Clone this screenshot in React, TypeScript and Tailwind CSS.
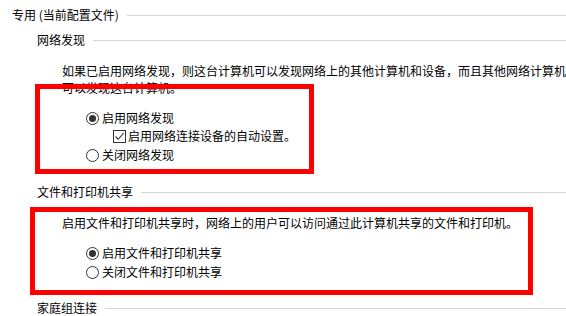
import React from "react";

function Radio({ checked }: { checked?: boolean }) {
  return (
    <span className="flex h-[13px] w-[13px] shrink-0 items-center justify-center rounded-full border border-[#333333] bg-white">
      {checked && <span className="h-[7px] w-[7px] rounded-full bg-[#333333]" />}
    </span>
  );
}

function Check() {
  return (
    <span className="flex h-[13px] w-[13px] shrink-0 items-center justify-center border border-[#333333] bg-white">
      <svg width="11" height="11" viewBox="0 0 11 11" fill="none">
        <path d="M1.5 5.5 L4.2 8.3 L9.6 2.2" stroke="#333333" strokeWidth="1.1" />
      </svg>
    </span>
  );
}

function Header({ text, pl, mt }: { text: string; pl: string; mt: string }) {
  return (
    <div className={`flex h-[16px] items-center ${pl} ${mt}`}>
      <span className="whitespace-nowrap">{text}</span>
      <span className="ml-[8px] h-px flex-1 bg-[#d4d4d4]" />
    </div>
  );
}

export default function App() {
  return (
    <div
      className="relative h-[316px] w-[566px] overflow-hidden bg-white text-[12px] leading-[16px] text-black"
      style={{ fontFamily: '"Microsoft YaHei", "Noto Sans CJK SC", sans-serif' }}
    >
      <Header text="专用 (当前配置文件)" pl="pl-[12px]" mt="mt-[7px]" />
      <Header text="网络发现" pl="pl-[37px]" mt="mt-[9px]" />
      <div className="mt-[15px] h-[16px] whitespace-nowrap pl-[62px]">
        如果已启用网络发现，则这台计算机可以发现网络上的其他计算机和设备，而且其他网络计算机
      </div>
      <div className="mt-[1px] h-[16px] whitespace-nowrap pl-[62px]">可以发现这台计算机。</div>
      <div className="mt-[14px] flex h-[16px] items-center gap-[3px] pl-[86px]">
        <Radio checked />
        <span>启用网络发现</span>
      </div>
      <div className="mt-[2px] flex h-[16px] items-center gap-[2px] pl-[113px]">
        <Check />
        <span>启用网络连接设备的自动设置。</span>
      </div>
      <div className="mt-[3px] flex h-[16px] items-center gap-[3px] pl-[86px]">
        <Radio />
        <span>关闭网络发现</span>
      </div>
      <Header text="文件和打印机共享" pl="pl-[37px]" mt="mt-[21px]" />
      <div className="mt-[15px] h-[16px] whitespace-nowrap pl-[62px]">
        启用文件和打印机共享时，网络上的用户可以访问通过此计算机共享的文件和打印机。
      </div>
      <div className="mt-[14px] flex h-[16px] items-center gap-[3px] pl-[86px]">
        <Radio checked />
        <span>启用文件和打印机共享</span>
      </div>
      <div className="mt-[3px] flex h-[16px] items-center gap-[3px] pl-[86px]">
        <Radio />
        <span>关闭文件和打印机共享</span>
      </div>
      <Header text="家庭组连接" pl="pl-[37px]" mt="mt-[20px]" />

      <div className="pointer-events-none absolute left-[35px] top-[84px] h-[90px] w-[279px] border-[5px] border-[#ff0000]" />
      <div className="pointer-events-none absolute left-[30px] top-[207px] h-[88px] w-[503px] border-[5px] border-[#ff0000]" />
    </div>
  );
}
